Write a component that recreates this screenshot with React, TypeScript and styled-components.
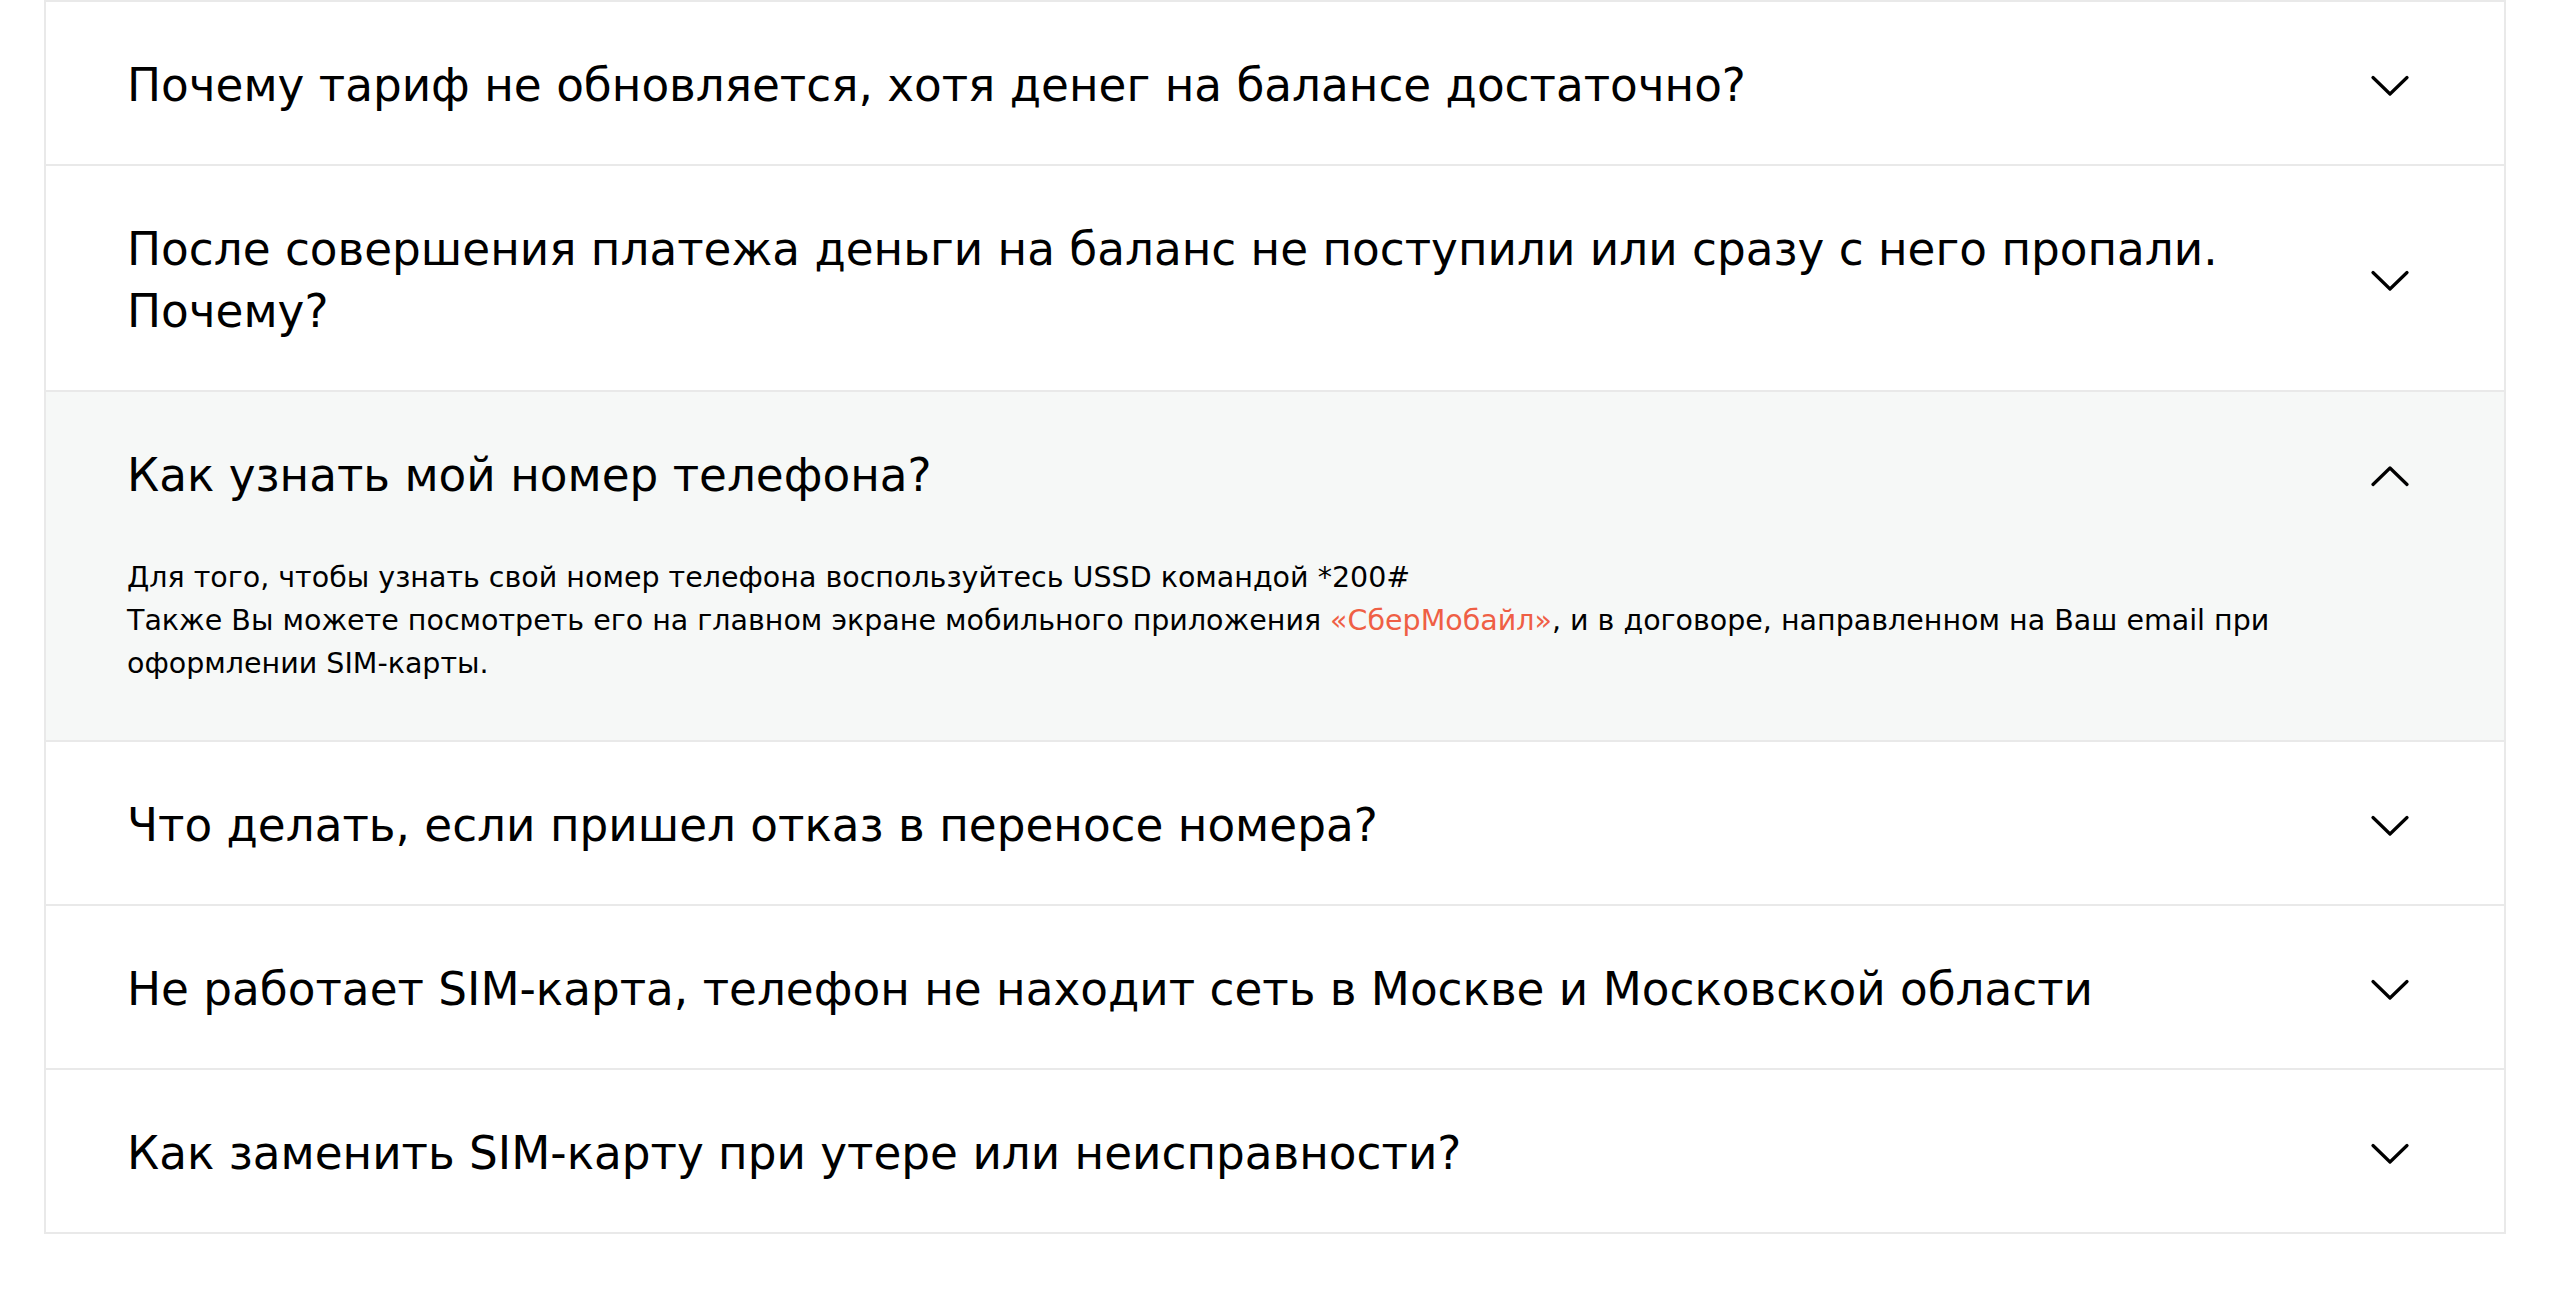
import React, {useState} from 'react';
import styled, {createGlobalStyle} from 'styled-components';

const GlobalStyle = createGlobalStyle`
  body {
    margin: 0;
    background: #fff;
    font-family: "DejaVu Sans", "Noto Sans", sans-serif;
    color: #000;
  }
`

const Page = styled.div`
  padding: 0 50px 80px 44px;
`

const List = styled.div`
  border: 2px solid #e9e9e9;
  border-bottom: none;
  background: #fff;
`

const Item = styled.div<{open: boolean}>`
  border-bottom: 2px solid #e9e9e9;
  background: ${p => p.open ? '#f6f8f7' : '#fff'};
`

const Head = styled.button`
  display: flex;
  align-items: center;
  gap: 40px;
  width: 100%;
  padding: 53px 95px 47px 81px;
  border: none;
  background: transparent;
  text-align: left;
  cursor: pointer;
  font-family: inherit;
  color: #000;
`

const Title = styled.span`
  flex: 1;
  font-size: 45.3px;
  line-height: 62px;
  font-weight: normal;
`

const Arrow = styled.svg<{open: boolean}>`
  flex: none;
  width: 38px;
  height: 22px;
  transform: ${p => p.open ? 'rotate(180deg)' : 'none'};
`

const Body = styled.div`
  padding: 2px 160px 55px 81px;
  font-size: 28.5px;
  line-height: 43px;
  > p { margin: 0; }
  a {
    color: #ef5f45;
    text-decoration: none;
  }
`

type Faq = {q: string, a?: React.ReactNode}

const faqs: Faq[] = [
  {q: 'Почему тариф не обновляется, хотя денег на балансе достаточно?'},
  {q: 'После совершения платежа деньги на баланс не поступили или сразу с него пропали. Почему?'},
  {
    q: 'Как узнать мой номер телефона?',
    a: (
      <>
        <p>Для того, чтобы узнать свой номер телефона воспользуйтесь USSD командой *200#</p>
        <p>Также Вы можете посмотреть его на главном экране мобильного приложения <a href="#">«СберМобайл»</a>, и в договоре, направленном на Ваш email при оформлении SIM-карты.</p>
      </>
    )
  },
  {q: 'Что делать, если пришел отказ в переносе номера?'},
  {q: 'Не работает SIM-карта, телефон не находит сеть в Москве и Московской области'},
  {q: 'Как заменить SIM-карту при утере или неисправности?'},
]

function Chevron({open}: {open: boolean}) {
  return (
    <Arrow open={open} viewBox="0 0 38 22" fill="none">
      <polyline points="2,2.5 19,19 36,2.5" stroke="#000" strokeWidth="3.2" strokeLinecap="round" strokeLinejoin="round"/>
    </Arrow>
  )
}

export default function App() {
  const [opened, setOpened] = useState<number>(2)

  return (
    <Page>
      <GlobalStyle/>
      <List>
        {faqs.map((f, i) => {
          const open = opened === i
          return (
            <Item key={f.q} open={open}>
              <Head onClick={() => setOpened(open ? -1 : i)}>
                <Title>{f.q}</Title>
                <Chevron open={open}/>
              </Head>
              {open && f.a ? <Body>{f.a}</Body> : ''}
            </Item>
          )
        })}
      </List>
    </Page>
  )
}
